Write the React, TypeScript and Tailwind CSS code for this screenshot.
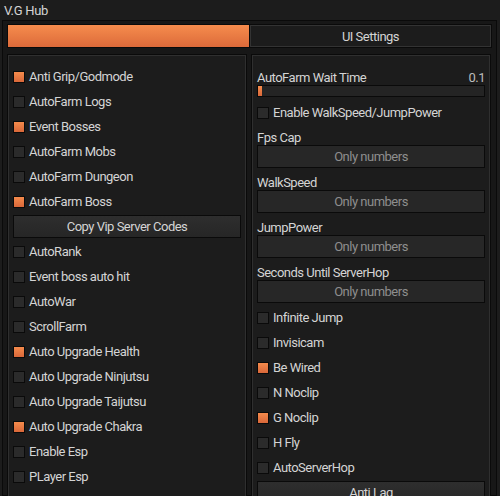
import React from "react";

const font = { fontFamily: 'Roboto, "Noto Sans", sans-serif' };

function Check({ on }: { on?: boolean }) {
  return (
    <div
      className={
        "w-[12px] h-[12px] border border-[#0a0a0a] shrink-0 " +
        (on ? "bg-gradient-to-b from-[#f58b4c] to-[#d9683a]" : "bg-[#2b2b2b]")
      }
    />
  );
}

function Row({ label, on }: { label: string; on?: boolean }) {
  return (
    <div className="h-[25px] flex items-center gap-[4px]">
      <Check on={on} />
      <span className="text-[13px] tracking-[-0.5px] text-[#d4d4d4] leading-none whitespace-nowrap">{label}</span>
    </div>
  );
}

function Button({ label }: { label: string }) {
  return (
    <div className="h-[23px] border border-[#0a0a0a] bg-gradient-to-b from-[#2e2e2e] to-[#262626] flex items-center justify-center text-[13px] tracking-[-0.5px] text-[#d4d4d4] leading-none">
      {label}
    </div>
  );
}

function Label({ label, className = "" }: { label: string; className?: string }) {
  return (
    <div className={"h-[16px] flex items-center text-[13px] tracking-[-0.5px] text-[#d4d4d4] leading-none whitespace-nowrap " + className}>
      {label}
    </div>
  );
}

function Input({ className = "" }: { className?: string }) {
  return (
    <div className={"h-[23px] border border-[#0a0a0a] bg-[#272727] flex items-center justify-center text-[13px] tracking-[-0.5px] text-[#8e8e8e] leading-none " + className}>
      Only numbers
    </div>
  );
}

function Panel({ children, className = "" }: { children: React.ReactNode; className?: string }) {
  return (
    <div className="border border-[#0a0a0a] h-full">
      <div className={"border border-[#2f2f2f] bg-[#1c1c1c] h-full " + className}>{children}</div>
    </div>
  );
}

export default function App() {
  return (
    <div className="w-[500px] h-[496px] bg-[#1c1c1c] overflow-hidden flex flex-col" style={font}>
      <div className="h-[20px] shrink-0 flex items-center pl-[4px] text-[13px] tracking-[-0.3px] text-[#d4d4d4] leading-none">
        V.G Hub
      </div>
      <div className="ml-[2px] mr-[3px] flex-1 border border-[#0a0a0a] bg-[#171717] px-[4px] pt-[3px] flex flex-col min-h-0">
        <div className="h-[24px] shrink-0 flex border border-[#0a0a0a]">
          <div className="w-[241px] bg-gradient-to-b from-[#f68c4d] to-[#dc6a3a]" />
          <div className="w-[1px] bg-[#0a0a0a]" />
          <div className="flex-1 border border-[#333333] bg-[#1c1c1c] flex items-center justify-center text-[13px] tracking-[-0.5px] text-[#d4d4d4] leading-none">
            UI Settings
          </div>
        </div>
        <div className="mt-[6px] grid grid-cols-[240px_240px] gap-[4px] flex-1 min-h-0">
          <Panel className="px-[4px] pt-[8px]">
            <Row label="Anti Grip/Godmode" on />
            <Row label="AutoFarm Logs" />
            <Row label="Event Bosses" on />
            <Row label="AutoFarm Mobs" />
            <Row label="AutoFarm Dungeon" />
            <Row label="AutoFarm Boss" on />
            <div className="py-[1px]">
              <Button label="Copy Vip Server Codes" />
            </div>
            <Row label="AutoRank" />
            <Row label="Event boss auto hit" />
            <Row label="AutoWar" />
            <Row label="ScrollFarm" />
            <Row label="Auto Upgrade Health" on />
            <Row label="Auto Upgrade Ninjutsu" />
            <Row label="Auto Upgrade Taijutsu" />
            <Row label="Auto Upgrade Chakra" on />
            <Row label="Enable Esp" />
            <Row label="PLayer Esp" />
          </Panel>
          <Panel className="px-[4px] pt-[13px]">
            <div className="h-[16px] flex items-center justify-between text-[13px] tracking-[-0.5px] text-[#d4d4d4] leading-none">
              <span>AutoFarm Wait Time</span>
              <span className="text-[#bdbdbd]">0.1</span>
            </div>
            <div className="h-[12px] border border-[#0a0a0a] bg-[#242424] flex">
              <div className="w-[4px] h-full bg-gradient-to-b from-[#f58b4c] to-[#d9683a]" />
            </div>
            <div className="mt-[3px]">
              <Row label="Enable WalkSpeed/JumpPower" />
            </div>
            <Label label="Fps Cap" className="mt-[4px]" />
            <Input />
            <Label label="WalkSpeed" className="mt-[6px]" />
            <Input />
            <Label label="JumpPower" className="mt-[6px]" />
            <Input />
            <Label label="Seconds Until ServerHop" className="mt-[6px]" />
            <Input />
            <div className="mt-[2px]">
              <Row label="Infinite Jump" />
              <Row label="Invisicam" />
              <Row label="Be Wired" on />
              <Row label="N Noclip" />
              <Row label="G Noclip" on />
              <Row label="H Fly" />
              <Row label="AutoServerHop" />
            </div>
            <div className="mt-[1px]">
              <Button label="Anti Lag" />
            </div>
          </Panel>
        </div>
      </div>
    </div>
  );
}
